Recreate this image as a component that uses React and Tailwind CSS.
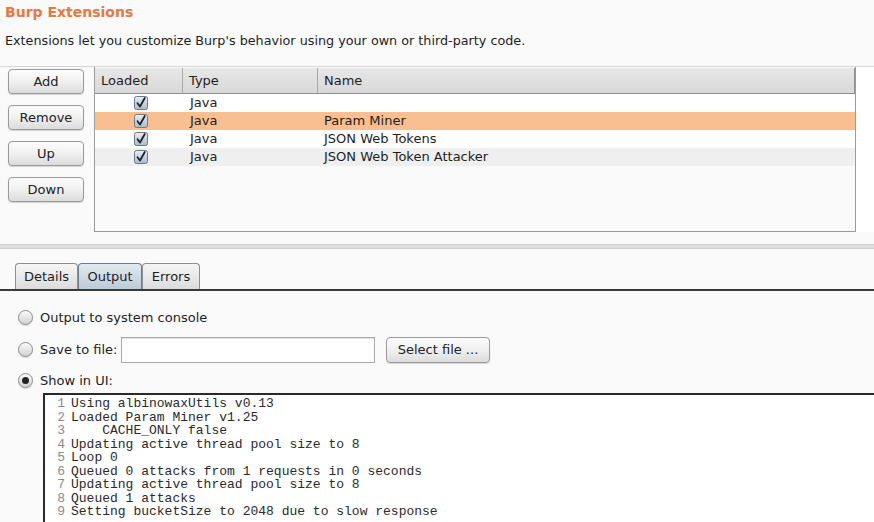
import React from "react";

const font = { fontFamily: '"DejaVu Sans", "Liberation Sans", sans-serif' };

function Check() {
  return (
    <svg width="14" height="14" viewBox="0 0 14 14">
      <defs>
        <linearGradient id="cb" x1="0" y1="0" x2="0" y2="1">
          <stop offset="0" stopColor="#e8eef5" />
          <stop offset="1" stopColor="#a9bacb" />
        </linearGradient>
      </defs>
      <rect x="0.5" y="0.5" width="13" height="13" rx="2" fill="url(#cb)" stroke="#6d7a88" />
      <path d="M3.5 7.2 L6 10.5 L10.8 2" fill="none" stroke="#1a2230" strokeWidth="1.8" strokeLinecap="round" strokeLinejoin="round" />
    </svg>
  );
}

function Btn({ children, className = "" }) {
  return (
    <div
      className={
        "flex items-center justify-center rounded-[4px] border border-[#9a9a9a] bg-gradient-to-b from-[#fdfdfd] via-[#f0f0f0] to-[#dcdcdc] text-[13px] text-[#222] shadow-[0_1px_1px_rgba(0,0,0,0.15)] " +
        className
      }
    >
      {children}
    </div>
  );
}

function Radio({ on }) {
  return (
    <div className="flex h-[15px] w-[15px] shrink-0 items-center justify-center rounded-full border border-[#8c8c8c] bg-gradient-to-b from-[#fbfbfb] to-[#d2d2d2] shadow-[0_1px_1px_rgba(0,0,0,0.15)]">
      {on && <div className="h-[7px] w-[7px] rounded-full bg-[#222]" />}
    </div>
  );
}

const rows = [
  { type: "Java", name: "", bg: "bg-white" },
  { type: "Java", name: "Param Miner", bg: "bg-[#f9bf90]" },
  { type: "Java", name: "JSON Web Tokens", bg: "bg-white" },
  { type: "Java", name: "JSON Web Token Attacker", bg: "bg-[#efefef]" },
];

const lines = [
  "Using albinowaxUtils v0.13",
  "Loaded Param Miner v1.25",
  "    CACHE_ONLY false",
  "Updating active thread pool size to 8",
  "Loop 0",
  "Queued 0 attacks from 1 requests in 0 seconds",
  "Updating active thread pool size to 8",
  "Queued 1 attacks",
  "Setting bucketSize to 2048 due to slow response",
];

export default function App() {
  return (
    <div className="flex h-[522px] w-[874px] flex-col overflow-hidden bg-[#fafafa] text-[#1e1e1e]" style={font}>
      {/* header */}
      <div className="h-[67px] border-b border-[#d6d6d6] bg-[#fafafa] pl-[5px] pt-[2px]">
        <div className="text-[14px] font-bold leading-[20px] text-[#e9783f]">Burp Extensions</div>
        <div className="mt-[10px] text-[12.75px] leading-[18px] text-[#1e1e1e]">
          Extensions let you customize Burp's behavior using your own or third-party code.
        </div>
      </div>

      {/* extensions table area */}
      <div className="flex h-[165px] bg-white">
        <div className="flex w-[94px] flex-col gap-[11px] bg-[#fafafa] pl-[8px] pt-[2px]">
          <Btn className="h-[25px] w-[76px]">Add</Btn>
          <Btn className="h-[25px] w-[76px]">Remove</Btn>
          <Btn className="h-[25px] w-[76px]">Up</Btn>
          <Btn className="h-[25px] w-[76px]">Down</Btn>
        </div>
        <div className="flex flex-1 flex-col border border-t-0 border-[#9b9b9b] bg-[#fafafa]">
          <div className="mt-[1px] flex h-[26px] w-[760px] border-b border-r border-[#8e8e8e] bg-gradient-to-b from-[#e8e8e8] to-[#d8d8d8] text-[13px] leading-[25px]">
            <div className="w-[88px] border-r border-[#a8a8a8] pl-[6px]">Loaded</div>
            <div className="w-[135px] border-r border-[#a8a8a8] pl-[6px]">Type</div>
            <div className="flex-1 pl-[6px]">Name</div>
          </div>
          {rows.map((r, i) => (
            <div key={i} className={"flex h-[18px] w-[760px] items-center text-[13px] " + r.bg}>
              <div className="flex w-[88px] justify-center pl-[3px]">
                <Check />
              </div>
              <div className="w-[135px] pl-[7px]">{r.type}</div>
              <div className="flex-1 pl-[6px]">{r.name}</div>
            </div>
          ))}
        </div>
        <div className="w-[18px] bg-white" />
      </div>

      {/* splitter */}
      <div className="h-[32px] bg-[#fafafa] pt-[12px]">
        <div className="h-[5px] border-y border-[#cfcfcf] bg-[#dedede]" />
      </div>

      {/* tabs */}
      <div className="flex h-[27px] items-end border-b-2 border-[#3a3a3a] bg-[#fafafa] pl-[15px]">
        <div className="flex h-[26px] w-[63px] items-center justify-center rounded-t-[4px] border border-b-0 border-[#8e8e8e] bg-gradient-to-b from-[#f6f6f6] to-[#dcdcdc] text-[13px]">Details</div>
        <div className="flex h-[26px] w-[64px] items-center justify-center rounded-t-[4px] border border-b-0 border-[#6f7b88] bg-gradient-to-b from-[#e2eaf1] to-[#bccbd8] text-[13px]">Output</div>
        <div className="flex h-[26px] w-[58px] items-center justify-center rounded-t-[4px] border border-b-0 border-[#8e8e8e] bg-gradient-to-b from-[#f6f6f6] to-[#dcdcdc] text-[13px]">Errors</div>
      </div>

      {/* output panel */}
      <div className="flex flex-1 flex-col bg-[#fafafa] text-[13px]">
        <div className="flex h-[102px] flex-col pl-[18px] pt-[18px]">
          <div className="flex h-[17px] items-center gap-[7px]">
            <Radio />
            <span>Output to system console</span>
          </div>
          <div className="mt-[15px] flex h-[17px] items-center gap-[7px]">
            <Radio />
            <span className="w-[68px] whitespace-nowrap">Save to file:</span>
            <div className="ml-[6px] h-[26px] w-[254px] shrink-0 border border-[#a9a9a9] bg-white shadow-[inset_0_1px_1px_rgba(0,0,0,0.12)]" />
            <Btn className="ml-[4px] h-[26px] w-[104px] shrink-0">Select file ...</Btn>
          </div>
          <div className="mt-[14px] flex h-[17px] items-center gap-[7px]">
            <Radio on />
            <span>Show in UI:</span>
          </div>
        </div>
        <div className="ml-[43px] flex-1 border-l-2 border-t-2 border-[#2a2a2a] bg-white pl-[10px] pt-[2px]">
          <div className="text-[13px] leading-[13.5px] text-[#2a2a2a]" style={{ fontFamily: '"Liberation Mono", monospace' }}>
            {lines.map((l, i) => (
              <div key={i} className="flex whitespace-pre">
                <span className="w-[10px] text-right text-[#8a8a8a]">{i + 1}</span>
                <span className="ml-[6px]">{l}</span>
              </div>
            ))}
          </div>
        </div>
      </div>
    </div>
  );
}
